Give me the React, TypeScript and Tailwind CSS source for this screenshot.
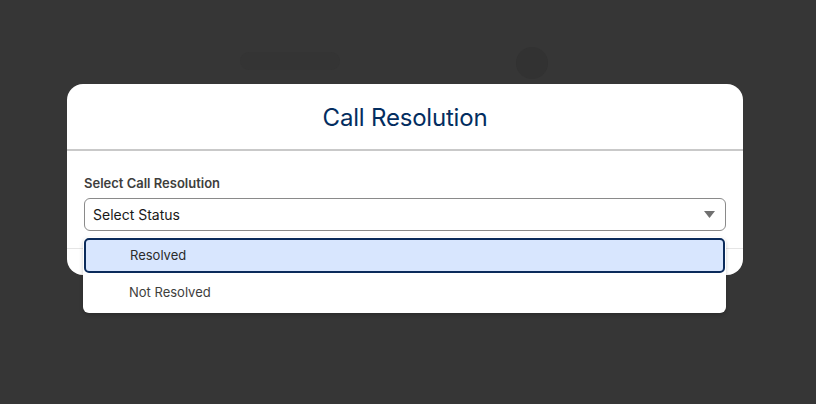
import React from 'react';

const options = ['Resolved', 'Not Resolved'];

export default function App() {
    return (
        <div className="relative w-[816px] h-[404px] overflow-hidden bg-[#363636] font-['Inter',sans-serif]">
            {/* dimmed page behind the modal */}
            <div className="absolute left-[240px] top-[52px] w-[100px] h-[18px] rounded-full bg-[#343434]" />
            <div className="absolute left-[516px] top-[47px] w-[32px] h-[32px] rounded-full bg-[#323232]" />

            <div className="pt-[84px] pl-[67px]">
                <div className="w-[676px] bg-white rounded-[16px]">
                    <div className="h-[67px] pt-[3px] flex items-center justify-center border-b-2 border-[#c9c9c9]">
                        <h2 className="text-[24px] text-[#032d60] tracking-[-0.2px]">Call Resolution</h2>
                    </div>

                    <div className="px-[17px] pt-[23px] pb-[17px] border-b border-[#e5e5e5]">
                        <label className="block text-[13px] font-semibold text-[#3e3e3c] leading-[18px] mb-[6px]">
                            Select Call Resolution
                        </label>
                        <div className="relative">
                            <div className="h-[33px] flex items-center justify-between pl-[8px] pr-[10px] border border-[#8a8a8a] rounded-[6px] text-[14px] text-[#181818]">
                                <span>Select Status</span>
                                <svg width="11" height="7" viewBox="0 0 11 7">
                                    <path d="M0 0 H11 L5.5 7 Z" fill="#707070" />
                                </svg>
                            </div>

                            <ul className="absolute left-[-1px] top-[39px] w-[643px] bg-white rounded-[6px] shadow-[0_2px_4px_rgba(0,0,0,0.2)] py-[1px] z-10">
                                {options.map((o, i) => (
                                    <li
                                        key={o}
                                        className={
                                            i === 0
                                                ? 'h-[35px] mx-[1px] flex items-center pl-[44px] text-[13px] text-[#2b2b2b] bg-[#d8e6fe] border-2 border-[#0b2b5b] rounded-[5px]'
                                                : 'h-[39px] flex items-center pl-[46px] text-[13px] text-[#3e3e3c]'
                                        }
                                    >
                                        {o}
                                    </li>
                                ))}
                            </ul>
                        </div>
                    </div>
                    <div className="h-[26px]" />
                </div>
            </div>
        </div>
    );
}
